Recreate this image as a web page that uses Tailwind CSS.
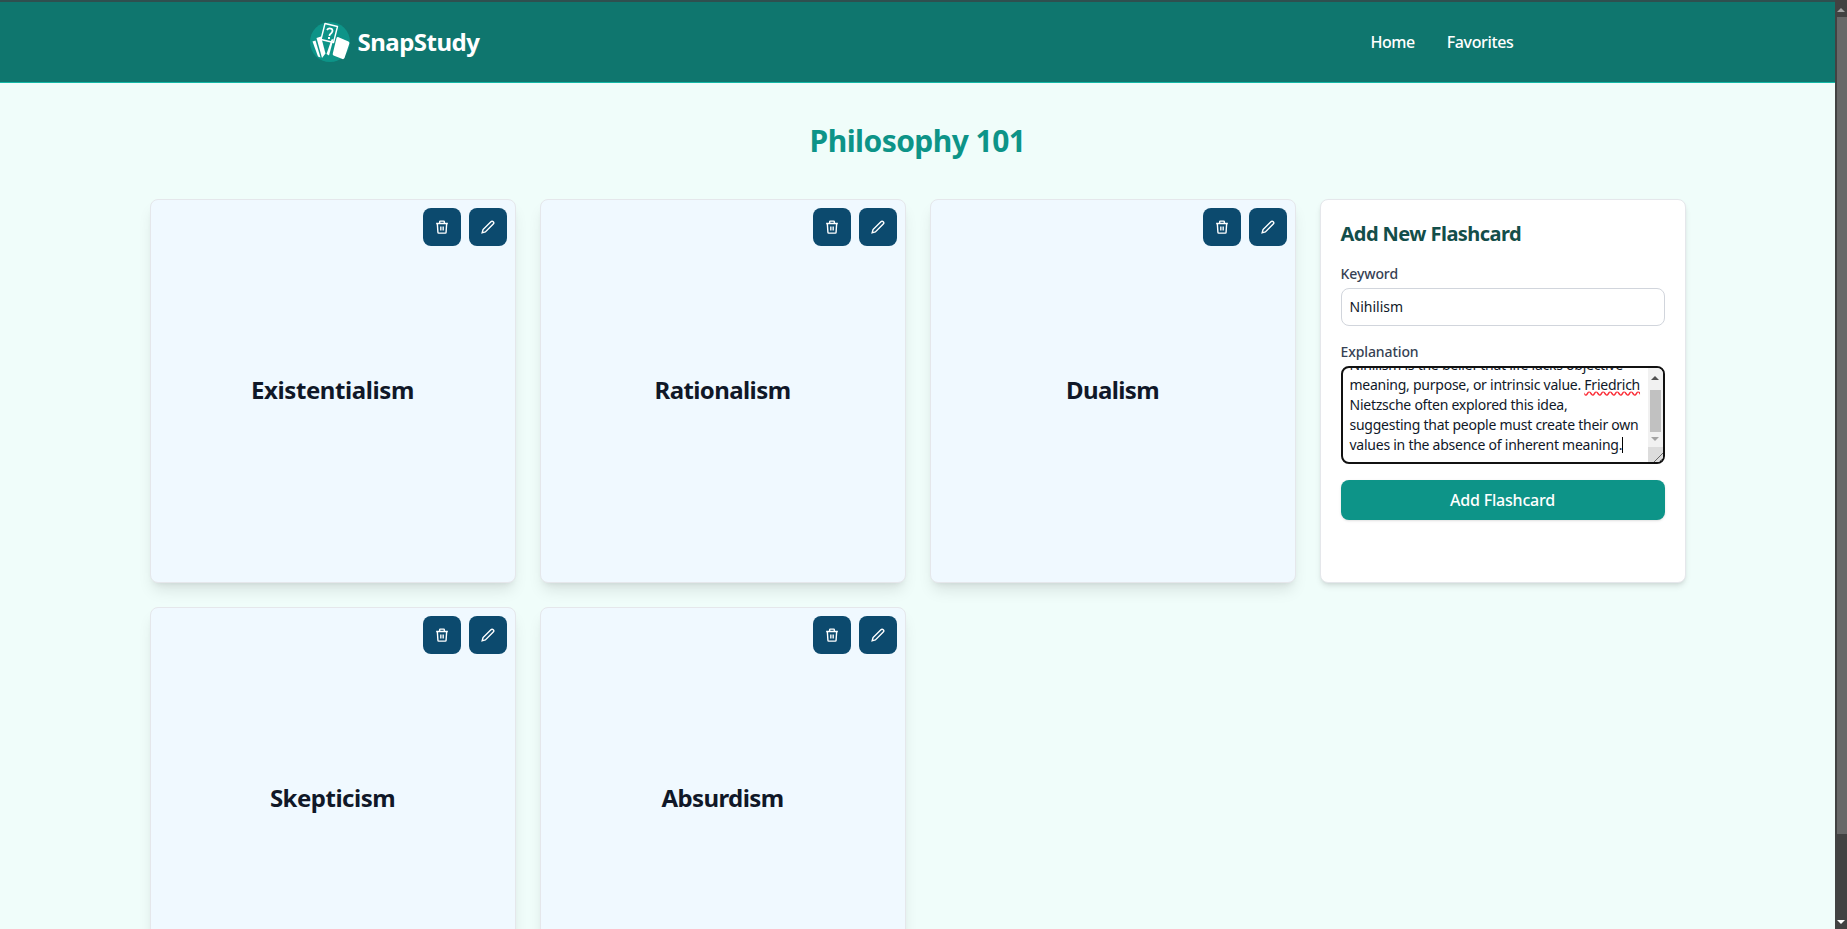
<!DOCTYPE html>
<html lang="en">
<head>
    <meta charset="UTF-8">
    <title>SnapStudy</title>
    <script src="https://cdn.jsdelivr.net/npm/@tailwindcss/browser@4"></script>
</head>
<body class="bg-[#f0fdfa] font-['Noto_Sans',sans-serif] text-gray-900">
<div class="flex h-[929px] overflow-hidden">
    <div class="flex-1 min-w-0 h-full overflow-hidden">
        <!-- Navbar -->
        <header class="h-[83px] bg-[#0f766e] border-t-2 border-t-[#2f4f4f] border-b border-b-[#14b8a6]">
            <nav class="max-w-7xl mx-auto px-8 h-full flex items-center justify-between">
                <a class="flex items-center gap-2" href="#">
                    <svg class="w-10 h-10" viewBox="0 0 40 40">
                        <circle cx="20" cy="20" r="20" fill="#0d9488"/>
                        <path d="M15 1.5 L27.5 4.5 L23.5 20.5 L11 17.5 Z" fill="#0d9488" stroke="#fff" stroke-width="1.4" stroke-linejoin="round"/>
                        <path d="M17 8 Q18.5 5.5 21.5 6.8 Q23.5 8.5 21.5 10.8 L19.8 12.6 L19.4 14" fill="none" stroke="#fff" stroke-width="1.8"/>
                        <rect x="18" y="15" width="2" height="2" fill="#fff"/>
                        <path d="M6.5 16 L11 14.5 L15.5 31.5 L12 36 Z" fill="#fff"/>
                        <path d="M2.5 19.5 L5.5 18.5 L10.5 35.5 L8 34.5 Z" fill="#fff"/>
                        <path d="M16.5 32 L21.5 17.5 L23.5 17 L19 33.5 Z" fill="#fff"/>
                        <path d="M28 15 L38.5 19.5 Q39.8 20.5 39.3 21.8 L34.5 36 Q33.5 37.5 32.5 37 L23.5 33.5 Q22.3 32.5 22.8 31.5 L26.5 16 Q27 14.8 28 15 Z" fill="#fff"/>
                    </svg>
                    <span class="text-2xl font-bold text-white tracking-[-0.5px]">SnapStudy</span>
                </a>
                <div class="flex items-center gap-2 text-white">
                    <a class="px-3 py-2 text-base font-medium tracking-[-0.5px]" href="#">Home</a>
                    <a class="px-3 py-2 text-base font-medium tracking-[-0.35px]" href="#">Favorites</a>
                </div>
            </nav>
        </header>

        <main class="max-w-screen-2xl mx-auto pt-10">
            <h1 class="text-3xl font-bold text-center text-[#0d9488] tracking-[-0.55px] mb-10">Philosophy 101</h1>

            <div class="grid grid-cols-4 gap-6">
                <!-- Flashcards -->
                <div class="relative h-[384px] flex items-center justify-center pb-[2px] rounded-lg border border-gray-200 bg-[#f0f9ff] shadow-lg">
                    <div class="absolute top-2 right-2 flex gap-2">
                        <button class="w-[38px] h-[38px] rounded-lg bg-[#0c4a6e] text-white flex items-center justify-center">
                            <svg class="w-3.5 h-3.5" viewBox="0 0 24 24" fill="none" stroke="currentColor" stroke-width="2.4"><path d="M2 6h20M8 6V3a1 1 0 0 1 1-1h6a1 1 0 0 1 1 1v3M20 6l-1 15a1.5 1.5 0 0 1-1.5 1.5h-11A1.5 1.5 0 0 1 5 21L4 6M10 11v7M14 11v7"/></svg>
                        </button>
                        <button class="w-[38px] h-[38px] rounded-lg bg-[#0c4a6e] text-white flex items-center justify-center">
                            <svg class="w-3.5 h-3.5" viewBox="0 0 24 24" fill="none" stroke="currentColor" stroke-width="2.4"><path d="M17 3a2.8 2.8 0 0 1 4 4L7.5 20.5 2 22l1.5-5.5L17 3z"/></svg>
                        </button>
                    </div>
                    <h2 class="text-2xl font-bold tracking-[-0.4px]">Existentialism</h2>
                </div>

                <div class="relative h-[384px] flex items-center justify-center pb-[2px] rounded-lg border border-gray-200 bg-[#f0f9ff] shadow-lg">
                    <div class="absolute top-2 right-2 flex gap-2">
                        <button class="w-[38px] h-[38px] rounded-lg bg-[#0c4a6e] text-white flex items-center justify-center">
                            <svg class="w-3.5 h-3.5" viewBox="0 0 24 24" fill="none" stroke="currentColor" stroke-width="2.4"><path d="M2 6h20M8 6V3a1 1 0 0 1 1-1h6a1 1 0 0 1 1 1v3M20 6l-1 15a1.5 1.5 0 0 1-1.5 1.5h-11A1.5 1.5 0 0 1 5 21L4 6M10 11v7M14 11v7"/></svg>
                        </button>
                        <button class="w-[38px] h-[38px] rounded-lg bg-[#0c4a6e] text-white flex items-center justify-center">
                            <svg class="w-3.5 h-3.5" viewBox="0 0 24 24" fill="none" stroke="currentColor" stroke-width="2.4"><path d="M17 3a2.8 2.8 0 0 1 4 4L7.5 20.5 2 22l1.5-5.5L17 3z"/></svg>
                        </button>
                    </div>
                    <h2 class="text-2xl font-bold tracking-[-0.6px]">Rationalism</h2>
                </div>

                <div class="relative h-[384px] flex items-center justify-center pb-[2px] rounded-lg border border-gray-200 bg-[#f0f9ff] shadow-lg">
                    <div class="absolute top-2 right-2 flex gap-2">
                        <button class="w-[38px] h-[38px] rounded-lg bg-[#0c4a6e] text-white flex items-center justify-center">
                            <svg class="w-3.5 h-3.5" viewBox="0 0 24 24" fill="none" stroke="currentColor" stroke-width="2.4"><path d="M2 6h20M8 6V3a1 1 0 0 1 1-1h6a1 1 0 0 1 1 1v3M20 6l-1 15a1.5 1.5 0 0 1-1.5 1.5h-11A1.5 1.5 0 0 1 5 21L4 6M10 11v7M14 11v7"/></svg>
                        </button>
                        <button class="w-[38px] h-[38px] rounded-lg bg-[#0c4a6e] text-white flex items-center justify-center">
                            <svg class="w-3.5 h-3.5" viewBox="0 0 24 24" fill="none" stroke="currentColor" stroke-width="2.4"><path d="M17 3a2.8 2.8 0 0 1 4 4L7.5 20.5 2 22l1.5-5.5L17 3z"/></svg>
                        </button>
                    </div>
                    <h2 class="text-2xl font-bold tracking-[-0.6px]">Dualism</h2>
                </div>

                <!-- Add form -->
                <div class="h-[384px] rounded-lg border border-gray-200 bg-white shadow-md px-5 pt-5">
                    <h3 class="text-xl font-bold text-[#134e4a] tracking-[-0.55px] mb-4">Add New Flashcard</h3>
                    <label class="block text-sm font-medium text-gray-700 tracking-[-0.1px] mb-1">Keyword</label>
                    <div class="h-[38px] rounded-lg border border-gray-300 px-2 flex items-center text-sm mb-4">Nihilism</div>
                    <label class="block text-sm font-medium text-gray-700 tracking-[-0.1px] mb-1">Explanation</label>
                    <div class="relative h-[98px] rounded-lg border-2 border-[#111] overflow-hidden mb-4 text-sm leading-5 tracking-[-0.25px]">
                        <div class="absolute left-[7px] top-[-13px] whitespace-nowrap">
                            Nihilism is the belief that life lacks objective<br>
                            meaning, purpose, or intrinsic value. <span class="underline decoration-wavy decoration-red-500">Friedrich</span><br>
                            Nietzsche often explored this idea,<br>
                            suggesting that people must create their own<br>
                            values in the absence of inherent meaning.<span class="inline-block w-px h-4 bg-black align-[-3px]"></span>
                        </div>
                        <!-- textarea scrollbar -->
                        <div class="absolute right-0 top-0 bottom-0 w-[15px] bg-[#f1f1f1] flex flex-col items-center">
                            <div class="h-[19px] flex items-center justify-center"><div class="w-0 h-0 border-x-4 border-x-transparent border-b-4 border-b-[#505050]"></div></div>
                            <div class="w-[11px] h-[42px] bg-[#c1c1c1] mt-[3px]"></div>
                            <div class="h-[14px] flex items-center justify-center"><div class="w-0 h-0 border-x-4 border-x-transparent border-t-4 border-t-[#a3a3a3]"></div></div>
                            <div class="flex-1 w-full bg-[#dcdcdc] mt-px relative">
                                <svg class="absolute right-0 bottom-0 w-3 h-3" viewBox="0 0 12 12" stroke="#666" fill="none"><path d="M3 12 12 3M8 12l4-4"/></svg>
                            </div>
                        </div>
                    </div>
                    <button class="w-full h-10 rounded-lg bg-[#0d9488] text-white font-medium tracking-[-0.2px] shadow-sm">Add Flashcard</button>
                </div>

                <div class="relative h-[384px] flex items-center justify-center pb-[2px] rounded-lg border border-gray-200 bg-[#f0f9ff] shadow-lg">
                    <div class="absolute top-2 right-2 flex gap-2">
                        <button class="w-[38px] h-[38px] rounded-lg bg-[#0c4a6e] text-white flex items-center justify-center">
                            <svg class="w-3.5 h-3.5" viewBox="0 0 24 24" fill="none" stroke="currentColor" stroke-width="2.4"><path d="M2 6h20M8 6V3a1 1 0 0 1 1-1h6a1 1 0 0 1 1 1v3M20 6l-1 15a1.5 1.5 0 0 1-1.5 1.5h-11A1.5 1.5 0 0 1 5 21L4 6M10 11v7M14 11v7"/></svg>
                        </button>
                        <button class="w-[38px] h-[38px] rounded-lg bg-[#0c4a6e] text-white flex items-center justify-center">
                            <svg class="w-3.5 h-3.5" viewBox="0 0 24 24" fill="none" stroke="currentColor" stroke-width="2.4"><path d="M17 3a2.8 2.8 0 0 1 4 4L7.5 20.5 2 22l1.5-5.5L17 3z"/></svg>
                        </button>
                    </div>
                    <h2 class="text-2xl font-bold tracking-[-0.5px]">Skepticism</h2>
                </div>

                <div class="relative h-[384px] flex items-center justify-center pb-[2px] rounded-lg border border-gray-200 bg-[#f0f9ff] shadow-lg">
                    <div class="absolute top-2 right-2 flex gap-2">
                        <button class="w-[38px] h-[38px] rounded-lg bg-[#0c4a6e] text-white flex items-center justify-center">
                            <svg class="w-3.5 h-3.5" viewBox="0 0 24 24" fill="none" stroke="currentColor" stroke-width="2.4"><path d="M2 6h20M8 6V3a1 1 0 0 1 1-1h6a1 1 0 0 1 1 1v3M20 6l-1 15a1.5 1.5 0 0 1-1.5 1.5h-11A1.5 1.5 0 0 1 5 21L4 6M10 11v7M14 11v7"/></svg>
                        </button>
                        <button class="w-[38px] h-[38px] rounded-lg bg-[#0c4a6e] text-white flex items-center justify-center">
                            <svg class="w-3.5 h-3.5" viewBox="0 0 24 24" fill="none" stroke="currentColor" stroke-width="2.4"><path d="M17 3a2.8 2.8 0 0 1 4 4L7.5 20.5 2 22l1.5-5.5L17 3z"/></svg>
                        </button>
                    </div>
                    <h2 class="text-2xl font-bold tracking-[-0.6px]">Absurdism</h2>
                </div>
            </div>
        </main>
    </div>

    <!-- Page scrollbar -->
    <div class="w-3 shrink-0 h-full bg-[#424242] flex flex-col items-end pt-0.5">
        <div class="w-full h-[15px] flex items-center justify-center"><div class="w-0 h-0 border-x-[4px] border-x-transparent border-b-[4px] border-b-[#a3a3a3]"></div></div>
        <div class="w-2.5 h-[817px] bg-[#686868]"></div>
        <div class="flex-1"></div>
        <div class="w-full h-[15px] flex items-center justify-center"><div class="w-0 h-0 border-x-[4px] border-x-transparent border-t-[4px] border-t-white"></div></div>
    </div>
</div>
</body>
</html>
